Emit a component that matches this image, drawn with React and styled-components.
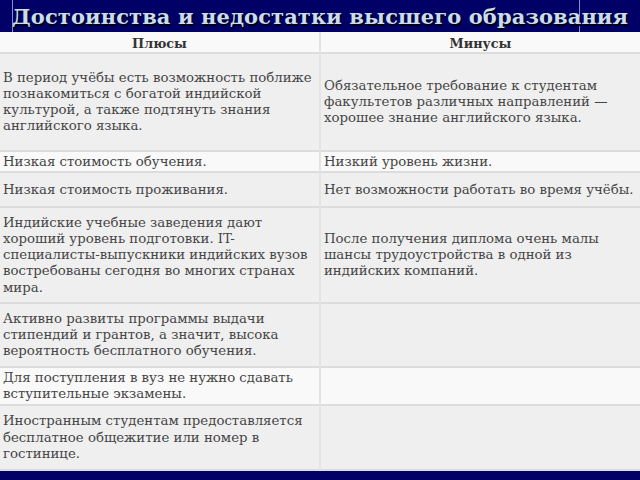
import React from "react";
import styled, { createGlobalStyle } from "styled-components";

const Global = createGlobalStyle`
  html, body { margin: 0; padding: 0; background: #000066; }
  body { width: 640px; height: 480px; overflow: hidden; }
`;

const Slide = styled.div`
  position: relative;
  width: 640px;
  height: 480px;
  background: #000066;
  overflow: hidden;
`;

const Content = styled.div`
  position: relative;
  z-index: 1;
  display: flex;
  flex-direction: column;
  height: 100%;
`;

const TitleBar = styled.div`
  height: 32px;
  display: flex;
  align-items: center;
  padding-left: 12px;
  flex-shrink: 0;
`;

const Title = styled.h1`
  margin: 0;
  font-family: "DejaVu Serif", serif;
  font-weight: bold;
  font-size: 21px;
  letter-spacing: 0.1px;
  color: #cadcf2;
  text-shadow: 1px 2px 1px #000;
  white-space: nowrap;
`;

const Table = styled.table`
  width: 640px;
  border-collapse: collapse;
  table-layout: fixed;
  font-family: "DejaVu Serif", serif;
  font-size: 13.3px;
  line-height: 16.2px;
  color: #464646;
`;

const Row = styled.tr`
  height: ${(p) => p.$h}px;
  background: ${(p) => (p.$light ? "#f9f9f9" : "#efefef")};
  border-bottom: 2px solid #dcdcdc;
`;

const HeadCell = styled.th`
  font-weight: bold;
  font-size: 12.8px;
  color: #333;
  text-align: center;
  vertical-align: middle;
  padding: 4px 0 0;
  border-right: 2px solid #e4e4e4;
  &:last-child { border-right: none; }
`;

const Cell = styled.td`
  vertical-align: middle;
  padding: 0 2px 0 3px;
  border-right: 2px solid #e4e4e4;
  &:last-child { border-right: none; padding-left: 3px; }
`;

const BottomBar = styled.div`
  flex: 1;
  background: #000066;
`;

const VLine = styled.div`
  position: absolute;
  top: 0;
  bottom: 0;
  left: ${(p) => p.$x}px;
  width: 1px;
  background: #8a8fc4;
  z-index: 0;
`;

const rows = [
  {
    h: 98,
    l: "В период учёбы есть возможность поближе познакомиться с богатой индийской культурой, а также подтянуть знания английского языка.",
    r: "Обязательное требование к студентам факультетов различных направлений — хорошее знание английского языка.",
  },
  { h: 21, light: true, l: "Низкая стоимость обучения.", r: "Низкий уровень жизни." },
  { h: 35, l: "Низкая стоимость проживания.", r: "Нет возможности работать во время учёбы." },
  {
    h: 96,
    l: "Индийские учебные заведения дают хороший уровень подготовки. IT-специалисты-выпускники индийских вузов востребованы сегодня во многих странах мира.",
    r: "После получения диплома очень малы шансы трудоустройства в одной из индийских компаний.",
  },
  {
    h: 64,
    l: "Активно развиты программы выдачи стипендий и грантов, а значит, высока вероятность бесплатного обучения.",
    r: "",
  },
  {
    h: 38,
    light: true,
    l: "Для поступления в вуз не нужно сдавать вступительные экзамены.",
    r: "",
  },
  {
    h: 65,
    l: "Иностранным студентам предоставляется бесплатное общежитие или номер в гостинице.",
    r: "",
  },
];

export default function App() {
  return (
    <Slide>
      <Global />
      <VLine $x={12} />
      <VLine $x={579} />
      <Content>
        <TitleBar>
          <Title>Достоинства и недостатки высшего образования</Title>
        </TitleBar>
        <Table>
          <colgroup>
            <col style={{ width: 320 }} />
            <col style={{ width: 320 }} />
          </colgroup>
          <tbody>
            <Row $h={21} $light>
              <HeadCell>Плюсы</HeadCell>
              <HeadCell>Минусы</HeadCell>
            </Row>
            {rows.map((r, i) => (
              <Row key={i} $h={r.h} $light={r.light}>
                <Cell>{r.l}</Cell>
                <Cell>{r.r}</Cell>
              </Row>
            ))}
          </tbody>
        </Table>
        <BottomBar />
      </Content>
    </Slide>
  );
}
